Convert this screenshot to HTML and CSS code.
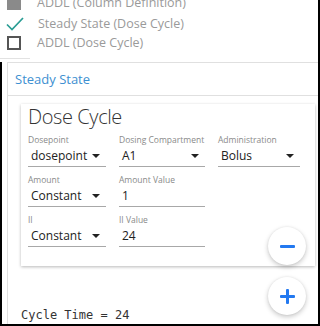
FILE: index.html
```html
<!DOCTYPE html>
<html>
<head>
<meta charset="utf-8">
<link rel="stylesheet" href="styles.css">
</head>
<body>
<div class="page">
  <ul class="checklist">
    <li class="item first"><span class="box filled"></span><span>ADDL (Column Definition)</span></li>
    <li class="item second"><svg class="check" width="18" height="14" viewBox="0 0 18 14"><path d="M1 7.5 L6 12.5 L17 1" fill="none" stroke="#2a9d94" stroke-width="1.7"/></svg><span>Steady State (Dose Cycle)</span></li>
    <li class="item"><span class="box"></span><span>ADDL (Dose Cycle)</span></li>
  </ul>
  <div class="tabline"></div>
  <div class="frame">
    <section class="panel">
      <header class="panel-head">Steady State</header>
      <div class="panel-body">
        <div class="card">
          <h2 class="card-title">Dose Cycle</h2>
          <div class="fields">
            <div class="field w1">
              <label class="lbl">Dosepoint</label>
              <div class="ctl select">dosepoint<span class="arrow"></span></div>
            </div>
            <div class="field w2">
              <label class="lbl">Dosing Compartment</label>
              <div class="ctl select">A1<span class="arrow"></span></div>
            </div>
            <div class="field w3">
              <label class="lbl">Administration</label>
              <div class="ctl select">Bolus<span class="arrow"></span></div>
            </div>
            <div class="field w1">
              <label class="lbl">Amount</label>
              <div class="ctl select">Constant<span class="arrow"></span></div>
            </div>
            <div class="field w2">
              <label class="lbl">Amount Value</label>
              <div class="ctl">1</div>
            </div>
            <div class="field w3"></div>
            <div class="field w1">
              <label class="lbl">II</label>
              <div class="ctl select">Constant<span class="arrow"></span></div>
            </div>
            <div class="field w2">
              <label class="lbl">II Value</label>
              <div class="ctl">24</div>
            </div>
          </div>
          <button class="fab minus" aria-label="remove"><span class="bar"></span></button>
        </div>
        <button class="fab plus" aria-label="add"><span class="bar"></span><span class="bar vert"></span></button>
        <pre class="cycle">Cycle Time = 24</pre>
      </div>
    </section>
  </div>
</div>
</body>
</html>
```
FILE: styles.css
```css
html, body {
  margin: 0;
  padding: 0;
  background: #fff;
}
.page {
  width: 320px;
  height: 326px;
  box-sizing: border-box;
  border-right: 2px solid #000;
  overflow: hidden;
  font-family: "Open Sans", "Noto Sans", sans-serif;
  display: flex;
  flex-direction: column;
}
.checklist {
  list-style: none;
  margin: -9px 0 0 0;
  padding: 0 0 0 7px;
}
.item {
  display: flex;
  align-items: center;
  height: 20px;
  gap: 16px;
  font-size: 12.5px;
  line-height: 20px;
  color: #9a9a9a;
}
.item.first { height: 23px; }
.item.second { height: 19px; gap: 14px; }
.box {
  width: 10px;
  height: 10px;
  border: 2px solid #555;
  flex: none;
}
.box.filled {
  background: #8a8a8a;
  border-color: #8a8a8a;
}
.check {
  flex: none;
  margin-left: -1px;
}
.tabline {
  width: 30px;
  height: 1px;
  background: #e2e2e2;
  margin-top: 5px;
}
.frame {
  margin-top: 3px;
  flex: 1;
  border-left: 2px solid #000;
  border-bottom: 2px solid #000;
  padding-left: 5px;
  min-height: 0;
}
.panel {
  border-top: 1px solid #e0e0e0;
  border-left: 1px solid #e0e0e0;
  height: 100%;
  box-sizing: border-box;
}
.panel-head {
  height: 32px;
  border-bottom: 1px solid #e0e0e0;
  padding-left: 7px;
  font-size: 13px;
  line-height: 32px;
  color: #3d8fd1;
}
.panel-body {
  position: relative;
  padding: 8px 0 0 13px;
}
.card {
  position: relative;
  width: 294px;
  box-sizing: border-box;
  padding: 0 0 19px 7px;
  background: #fff;
  box-shadow: 0 1px 3px rgba(0,0,0,0.28);
}
.card-title {
  margin: 0;
  font-weight: 300;
  font-size: 20px;
  letter-spacing: -0.4px;
  line-height: 26px;
  color: #333;
}
.fields {
  display: grid;
  grid-template-columns: 78px 86px 82px;
  column-gap: 13px;
  row-gap: 7px;
  margin-top: 4px;
}
.lbl {
  display: block;
  font-size: 8.5px;
  line-height: 12px;
  color: #8a8a8a;
  white-space: nowrap;
}
.ctl {
  position: relative;
  height: 20px;
  border-bottom: 1px solid #a8a8a8;
  font-size: 12px;
  line-height: 20px;
  color: #222;
  padding-left: 3px;
}
.arrow {
  position: absolute;
  right: 6px;
  top: 8px;
  width: 0;
  height: 0;
  border-left: 4px solid transparent;
  border-right: 4px solid transparent;
  border-top: 4px solid #222;
}
.fab {
  position: absolute;
  width: 38px;
  height: 38px;
  border-radius: 50%;
  border: none;
  background: #fff;
  box-shadow: 0 2px 5px rgba(0,0,0,0.22), 0 0 2px rgba(0,0,0,0.08);
  padding: 0;
  display: flex;
  align-items: center;
  justify-content: center;
}
.fab .bar {
  position: absolute;
  width: 15px;
  height: 3px;
  background: #2379f0;
  border-radius: 1px;
}
.fab .bar.vert {
  width: 3px;
  height: 15px;
}
.fab.minus {
  left: 247px;
  top: 123px;
}
.fab.plus {
  left: 260px;
  top: 181px;
}
.cycle {
  margin: 41px 0 0 0;
  font-family: "DejaVu Sans Mono", "Liberation Mono", monospace;
  font-size: 12px;
  line-height: 16px;
  color: #333;
}
```
